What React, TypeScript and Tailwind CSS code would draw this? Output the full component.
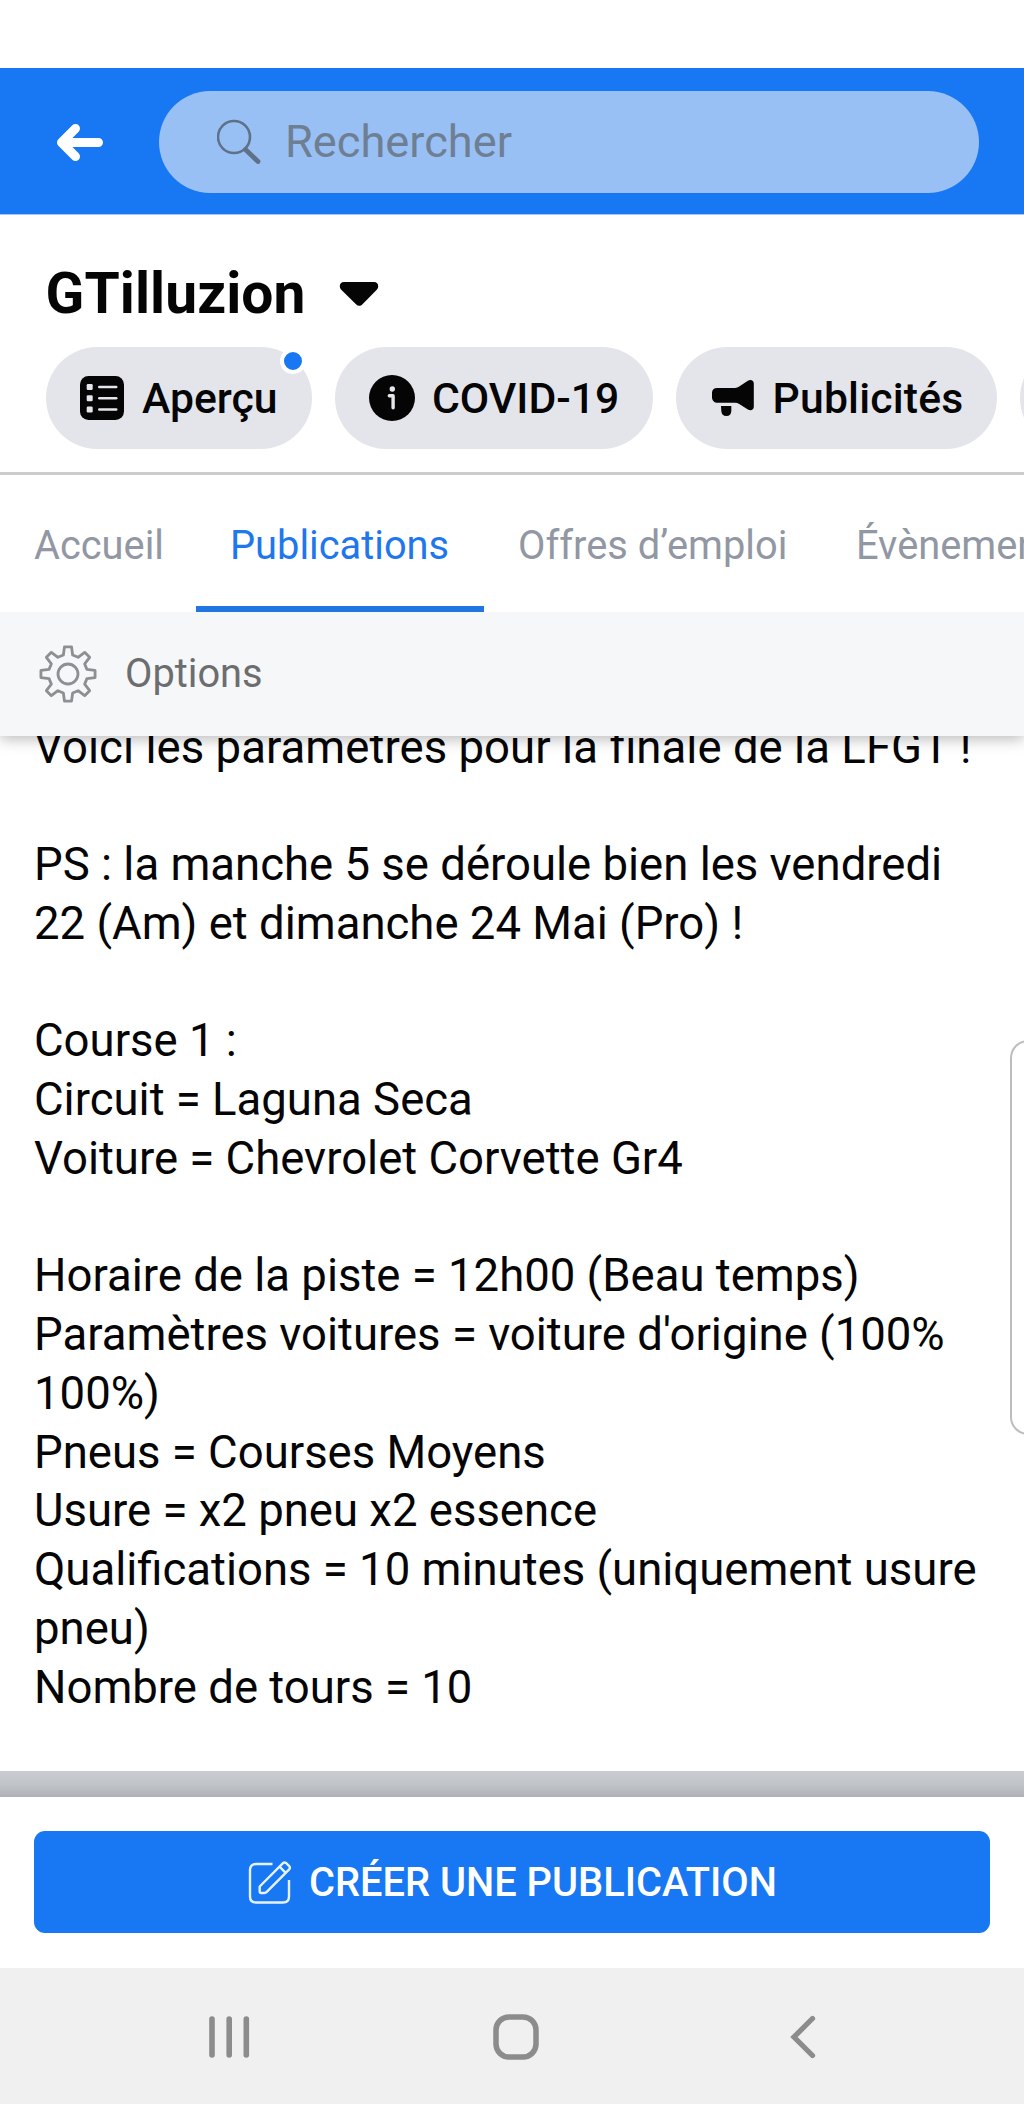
import React from 'react';

const postLines = [
  'Voici les paramètres pour la finale de la LFGT !',
  '',
  'PS : la manche 5 se déroule bien les vendredi',
  '22 (Am) et dimanche 24 Mai (Pro) !',
  '',
  'Course 1 :',
  'Circuit = Laguna Seca',
  'Voiture = Chevrolet Corvette Gr4',
  '',
  'Horaire de la piste = 12h00 (Beau temps)',
  "Paramètres voitures = voiture d'origine (100%",
  '100%)',
  'Pneus = Courses Moyens',
  'Usure = x2 pneu x2 essence',
  'Qualifications = 10 minutes (uniquement usure',
  'pneu)',
  'Nombre de tours = 10',
];

const tabs = [
  { label: 'Accueil', className: 'w-[196px]' },
  { label: 'Publications', className: 'w-[288px] border-b-[6px] border-[#2176e2] text-[#1f77ee]' },
  { label: 'Offres d’emploi', className: 'w-[338px]' },
  { label: 'Évènements', className: '' },
];

const BackArrow = () => (
  <svg width="48" height="40" viewBox="0 0 48 40" fill="none" stroke="#fff" strokeWidth="9" strokeLinecap="round" strokeLinejoin="round">
    <path d="M42.5 20.5H6M19.5 6.5L5.5 20.5l14 14" />
  </svg>
);

const SearchIcon = () => (
  <svg width="46" height="46" viewBox="0 0 46 46" fill="none" stroke="#5f7188">
    <circle cx="17" cy="18" r="16" strokeWidth="2.6" />
    <path d="M28.5 30.500L41 42.500" strokeWidth="4.800" strokeLinecap="round" />
  </svg>
);

const ListIcon = () => (
  <svg width="44" height="44" viewBox="0 0 44 44">
    <rect width="44" height="44" rx="8.5" fill="#050505" />
    {[11, 22.3, 33.5].map((y) => (
      <g key={y} fill="#e4e6eb">
        <rect x="6.7" y={y - 3} width="6" height="6" rx="1.2" />
        <rect x="18" y={y - 1.3} width="19.5" height="2.6" rx="1.3" />
      </g>
    ))}
  </svg>
);

const InfoIcon = () => (
  <svg width="46" height="46" viewBox="0 0 46 46">
    <circle cx="23" cy="23" r="23" fill="#050505" />
    <circle cx="23.3" cy="14" r="2.7" fill="#e4e6eb" />
    <path d="M20.3 20.8h3.8v12" fill="none" stroke="#e4e6eb" strokeWidth="3.4" strokeLinecap="round" strokeLinejoin="round" />
  </svg>
);

const MegaphoneIcon = () => (
  <svg width="42" height="36" viewBox="0 0 42 36" fill="#050505">
    <path d="M5 8h18c1.500 0 3-.5 4.200-1.400L35.500 1c3-2 6.300-.8 6.300 2.500v23.300c0 3.300-3.300 4.500-6.300 2.500l-8.300-5.400C26 23.200 24.500 22.800 23 22.800H5.500C2.500 22.800 0 20.500 0 17.500v-5C0 10 2 8 5 8z" />
    <path d="M9 26h10.300v5c0 3-1.800 5-5 5s-4.600-1.600-5-5z" />
  </svg>
);

const gearPath = () => {
  // eight teeth, each one drawn as four corner points
  const points: string[] = [];
  for (let i = 0; i < 8; i++) {
    const mid = (i * Math.PI) / 4;
    [[-0.24, 19.5], [-0.13, 27.3], [0.13, 27.3], [0.24, 19.5]].forEach(([a, r]) => {
      points.push(`${(29 + r * Math.sin(mid + a)).toFixed(2)} ${(29 - r * Math.cos(mid + a)).toFixed(2)}`);
    });
  }
  return `M${points.join('L')}Z`;
};

const GearIcon = () => (
  <svg width="58" height="58" viewBox="0 0 58 58" fill="none" stroke="#8d8f92" strokeWidth="2.8" strokeLinejoin="round">
    <path d={gearPath()} />
    <circle cx="29" cy="29" r="10" />
  </svg>
);

const ComposeIcon = () => (
  <svg width="44" height="44" viewBox="0 0 44 44" fill="none" stroke="#e6f3ff" strokeWidth="2.4" strokeLinejoin="round">
    <path d="M24.500 4H8C4 4 2 6.500 2 10v26.500c0 4 2 6 6 6h27c4 0 6-2 6-6V20" />
    <path d="M11.700 26.500L35 3.200c1-1 2.200-1 3.200 0l3 3c1 1 1 2.200 0 3.200L18.500 32.200c-.5.500-1 .8-2 .8h-3.300c-1 0-1.500-.6-1.500-1.500zM31.500 6.700l6.200 6.200" />
  </svg>
);

const Chip: React.FC<{ icon: React.ReactNode; label: string; className: string; dot?: boolean }> = ({ icon, label, className, dot }) => (
  <div className={`relative flex h-full shrink-0 items-center rounded-full bg-[#e4e5ea] text-[42.7px] font-medium leading-none text-[#050505] ${className}`}>
    {icon}
    <span className="whitespace-nowrap pt-px">{label}</span>
    {dot && <span className="absolute right-[6px] top-[1px] size-[26px] rounded-full border-4 border-white bg-[#1877f2]" />}
  </div>
);

const App: React.FC = () => {
  return (
    <div className="relative flex h-[2104px] w-[1024px] flex-col overflow-hidden bg-white font-['Roboto',sans-serif] text-[#050505]">
      <div className="h-[68px] shrink-0" />

      <header className="flex h-[147px] shrink-0 items-start border-b border-[#a9c6f5] bg-[#1877f2] pl-[56px] pt-[23px]">
        <div className="flex h-[102px] w-[103px] items-center">
          <BackArrow />
        </div>
        <div className="flex h-[102px] w-[819.5px] items-center rounded-full bg-[#99c0f4] pl-[58px] text-[45.2px] leading-none text-[#6f7f93]">
          <SearchIcon />
          <span className="ml-[22px]">Rechercher</span>
        </div>
      </header>

      <div className="flex h-[257px] shrink-0 flex-col">
        <div className="flex h-[132px] items-center pl-[45.5px] pt-[25px]">
          <h1 className="pt-[2px] text-[56.9px] font-bold leading-none tracking-[0.1px]">GTilluzion</h1>
          <svg className="ml-[33px]" width="40" height="26" viewBox="0 0 40 26">
            <path d="M5 1h30c4 0 5.500 4.500 3 7.500L23.500 23.300c-2 2-4.500 2-6.500 0L2 8.500C-.5 5.500 1 1 5 1z" fill="#050505" />
          </svg>
        </div>
        <div className="flex h-[102px] gap-[23px] pl-[45.500px]">
          <Chip icon={<ListIcon />} label="Aperçu" className="w-[266.500px] gap-[18px] pl-[34.5px]" dot />
          <Chip icon={<InfoIcon />} label="COVID-19" className="w-[318px] gap-[17px] pl-[34px]" />
          <Chip icon={<MegaphoneIcon />} label="Publicités" className="w-[321px] gap-[18.5px] pl-[36px] tracking-[0.2px]" />
          <Chip icon={null} label="" className="w-[300px]" />
        </div>
      </div>

      <nav className="relative z-20 flex h-[139.5px] shrink-0 overflow-hidden border-t-[3px] border-[#cccccc] bg-white text-[39.8px] leading-[141px] text-[#9197a3]">
        {tabs.map((tab) => (
          <div key={tab.label} className={`h-[136.5px] shrink-0 whitespace-nowrap pl-[34px] ${tab.className}`}>
            {tab.label}
          </div>
        ))}
      </nav>

      <div className="z-10 flex h-[124.5px] shrink-0 items-center bg-[#f6f7f9] pl-[39px] text-[39.8px] leading-none text-[#6c6d6f] shadow-[0_3px_14px_rgba(0,0,0,0.28)]">
        <GearIcon />
        <span className="ml-[28px] pt-px">Options</span>
      </div>

      <main className="h-[1035px] shrink-0 overflow-hidden pl-[34px]">
        <div className="-mt-[17.500px] text-[45.5px] leading-[58.75px]">
          {postLines.map((line, i) => (
            <p key={i} className="h-[58.75px] whitespace-nowrap first:tracking-[0.05px]">{line}</p>
          ))}
        </div>
      </main>

      <div className="h-[26px] shrink-0 bg-gradient-to-b from-[#caccd0] via-[#c1c4c9] to-[#afb1b6]" />

      <div className="h-[171px] shrink-0 px-[34px] pt-[34px]">
        <button className="flex h-[102px] w-full items-center rounded-[11px] bg-[#1877f2] pl-[214px] text-[39.8px] font-medium leading-none text-white">
          <ComposeIcon />
          <span className="ml-[17px] whitespace-nowrap pt-[2px]">CRÉER UNE PUBLICATION</span>
        </button>
      </div>

      <footer className="flex h-[136px] items-center bg-[#f0f0f0] pl-[208px] pt-px">
        <svg width="42" height="44" viewBox="0 0 42 44" fill="none" stroke="#8c8c8c" strokeWidth="5.600" strokeLinecap="round">
          <path d="M4 4v36M21.200 4v36M38.300 4v36" />
        </svg>
        <svg className="ml-[242px]" width="48" height="48" viewBox="0 0 48 48" fill="none" stroke="#8c8c8c" strokeWidth="5.500">
          <rect x="4" y="4" width="40" height="40" rx="13" />
        </svg>
        <svg className="ml-[249px]" width="28" height="46" viewBox="0 0 28 46" fill="none" stroke="#8c8c8c" strokeWidth="5.300" strokeLinecap="round">
          <path d="M23.500 4.500L5 23l18.500 18.500" />
        </svg>
      </footer>

      {/* edge panel handle */}
      <div className="absolute -right-5 top-[1040px] h-[395px] w-[34px] rounded-l-[18px] border-2 border-[#bdbdbd] bg-white" />
    </div>
  );
};

export default App;
